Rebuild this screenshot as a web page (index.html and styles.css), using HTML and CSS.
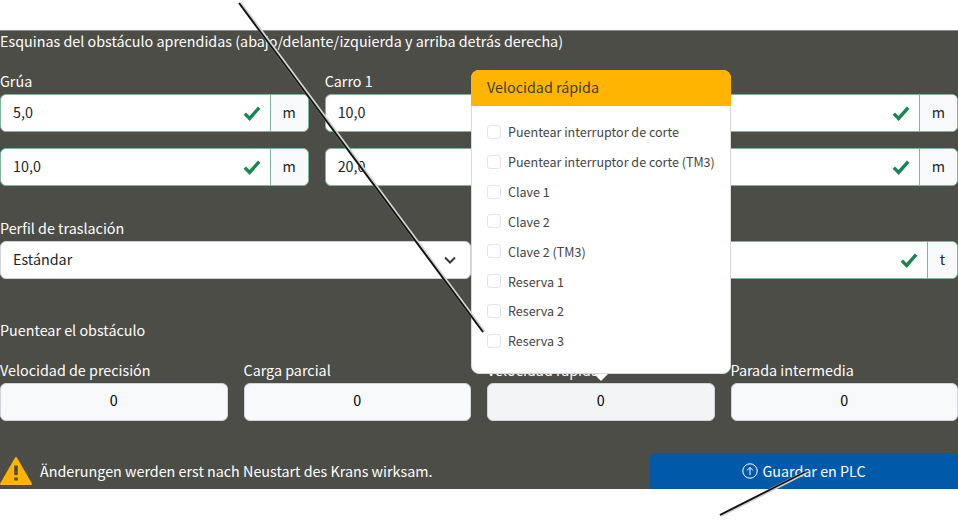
FILE: index.html
```html
<!DOCTYPE html>
<html lang="es">
<head>
<meta charset="utf-8">
<title>Esquinas del obstáculo</title>
<link rel="stylesheet" href="styles.css">
</head>
<body>
<main class="panel">
  <h2 class="title">Esquinas del obstáculo aprendidas (abajo/delante/izquierda y arriba detrás derecha)</h2>
  <section class="grid three">
    <div class="field">
      <label>Grúa</label>
      <div class="group"><span class="input">5,0</span><svg class="check" viewBox="0 0 18 16"><path d="M1.8 8.6 6.6 13.4 16.2 2.6"/></svg><span class="addon"><span>m</span></span></div>
    </div>
    <div class="field">
      <label>Carro 1</label>
      <div class="group"><span class="input">10,0</span><svg class="check" viewBox="0 0 18 16"><path d="M1.8 8.6 6.6 13.4 16.2 2.6"/></svg><span class="addon"></span></div>
    </div>
    <div class="field">
      <label></label>
      <div class="group"><span class="input"></span><svg class="check" viewBox="0 0 18 16"><path d="M1.8 8.6 6.6 13.4 16.2 2.6"/></svg><span class="addon"><span>m</span></span></div>
    </div>
    <div class="field">
      <div class="group"><span class="input">10,0</span><svg class="check" viewBox="0 0 18 16"><path d="M1.8 8.6 6.6 13.4 16.2 2.6"/></svg><span class="addon"><span>m</span></span></div>
    </div>
    <div class="field">
      <div class="group"><span class="input">20,0</span><svg class="check" viewBox="0 0 18 16"><path d="M1.8 8.6 6.6 13.4 16.2 2.6"/></svg><span class="addon"></span></div>
    </div>
    <div class="field">
      <div class="group"><span class="input"></span><svg class="check" viewBox="0 0 18 16"><path d="M1.8 8.6 6.6 13.4 16.2 2.6"/></svg><span class="addon"><span>m</span></span></div>
    </div>
  </section>
  <section class="grid two">
    <div class="field">
      <label>Perfil de traslación</label>
      <div class="select"><span class="input">Estándar</span><svg class="chevron" viewBox="0 0 16 16"><path d="M3 5.5 8 10.5 13 5.5"/></svg></div>
    </div>
    <div class="field">
      <label></label>
      <div class="group"><span class="input"></span><svg class="check" viewBox="0 0 18 16"><path d="M1.8 8.6 6.6 13.4 16.2 2.6"/></svg><span class="addon narrow"><span>t</span></span></div>
    </div>
  </section>
  <h3 class="subtitle">Puentear el obstáculo</h3>
  <section class="grid four">
    <div class="field"><label>Velocidad de precisión</label><button class="stepper">0</button></div>
    <div class="field"><label>Carga parcial</label><button class="stepper">0</button></div>
    <div class="field"><label>Velocidad rápida</label><button class="stepper active">0</button></div>
    <div class="field"><label>Parada intermedia</label><button class="stepper">0</button></div>
  </section>
  <footer class="footer">
    <div class="warning">
      <svg class="warn-icon" viewBox="0 0 32 30"><path class="warn-bg" d="M16 2 31 28H1Z"/><path class="warn-mark" d="M16 9.5V19M16 21.5V24.5"/></svg>
      <span class="warn-text">Änderungen werden erst nach Neustart des Krans wirksam.</span>
    </div>
    <button class="save">
      <svg class="up" viewBox="0 0 16 16"><circle cx="8" cy="8" r="7.2"/><path d="M8 12V4.6M5 7.4 8 4.4 11 7.4"/></svg>
      <span class="save-text">Guardar en PLC</span>
    </button>
  </footer>
</main>

<aside class="popover">
  <header class="pop-head">Velocidad rápida</header>
  <ul class="pop-list">
    <li><i class="box"></i>Puentear interruptor de corte</li>
    <li><i class="box"></i>Puentear interruptor de corte (TM3)</li>
    <li><i class="box"></i>Clave 1</li>
    <li><i class="box"></i>Clave 2</li>
    <li><i class="box"></i>Clave 2 (TM3)</li>
    <li><i class="box"></i>Reserva 1</li>
    <li><i class="box"></i>Reserva 2</li>
    <li><i class="box"></i>Reserva 3</li>
  </ul>
</aside>

<svg class="callouts" viewBox="0 0 958 520">
  <path class="halo" d="M240 3 484 332M720 515.7 805 472.7"/>
  <path class="line" d="M239 3 483 332M720 515 805 472"/>
</svg>
</body>
</html>
```

FILE: styles.css
```css
* { box-sizing: border-box; }
html, body { margin: 0; height: 520px; overflow: hidden; background: #fff; }
body {
  position: relative;
  padding-top: 30px;
  font-family: "Noto Sans CJK JP", "Noto Sans", sans-serif;
  font-size: 14.33px;
  color: #212529;
}
.panel {
  height: 459px;
  background: #4d4d47;
  color: #fff;
  box-shadow: inset 0 1px 0 #8a8a85;
  display: flex;
  flex-direction: column;
}
.title, .subtitle { margin: 0; height: 24px; font-size: inherit; font-weight: 400; line-height: 22px; }
.grid { display: grid; column-gap: 16px; }
.three { grid-template-columns: repeat(3, 1fr); row-gap: 16px; margin-top: 16px; }
.two { grid-template-columns: repeat(2, 1fr); margin-top: 31px; }
.four { grid-template-columns: repeat(4, 1fr); margin-top: 16px; }
.field label { display: block; line-height: 22px; height: 24px; }
.group, .select {
  height: 38px;
  display: flex;
  align-items: center;
  background: #fff;
  color: #212529;
  border-radius: 6px;
}
.group { border: 1px solid #7fb59c; overflow: hidden; }
.input { flex: 1; padding: 0 0 3px 12px; }
.check { width: 18px; height: 16px; margin-right: 9px; fill: none; stroke: #198754; stroke-width: 3.4; }
.addon {
  width: 38px;
  height: 100%;
  padding-bottom: 3px;
  display: flex;
  align-items: center;
  justify-content: center;
  background: #f8f9fa;
  border-left: 1px solid #7fb59c;
}
.addon.narrow { width: 30px; }
.select { justify-content: space-between; padding-right: 12px; border: 1px solid #ced4da; }
.chevron { width: 16px; height: 16px; fill: none; stroke: #343a40; stroke-width: 2; }
.subtitle { margin-top: 40px; }
.stepper {
  width: 100%;
  height: 38px;
  display: block;
  padding: 0 0 5px;
  font: inherit;
  color: #000;
  background: #f8f9fa;
  border: 1px solid #ced4da;
  border-radius: 6px;
}
.stepper.active { background: #f3f4f5; }
.footer { margin-top: auto; display: flex; justify-content: space-between; align-items: flex-end; }
.warning { display: flex; align-items: center; gap: 8px; height: 36px; }
.warn-icon { width: 32px; height: 30px; }
.warn-text, .save-text { padding-bottom: 2px; }
.warn-bg { fill: #ffb500; stroke: #ffb500; stroke-width: 2; stroke-linejoin: round; }
.warn-mark { fill: none; stroke: #4d4d47; stroke-width: 3.6; }
.save {
  width: 308px;
  height: 36px;
  display: flex;
  align-items: center;
  justify-content: center;
  gap: 4px;
  padding: 0;
  font: inherit;
  color: #fff;
  background: #005aa9;
  border: 0;
  border-radius: 6px 6px 0 0;
}
.up { width: 16px; height: 16px; fill: none; stroke: #fff; stroke-width: 1; }
.popover {
  position: absolute;
  left: 471px;
  top: 70px;
  width: 260px;
  height: 304px;
  background: #fff;
  border: 1px solid #d9d9d9;
  border-radius: 8px;
}
.popover::after {
  content: "";
  position: absolute;
  left: 122px;
  bottom: -8px;
  border: 7px solid transparent;
  border-bottom: 0;
  border-top: 7px solid #fff;
}
.pop-head {
  height: 36px;
  margin: -1px -1px 0;
  padding-left: 16px;
  line-height: 34px;
  background: #ffb500;
  color: #3d3a2e;
  border-radius: 8px 8px 0 0;
}
.pop-list { list-style: none; margin: 11px 0 0; padding: 0 0 0 15px; font-size: 12.54px; color: #444; }
.pop-list li { display: flex; align-items: center; gap: 7px; height: 29.85px; white-space: nowrap; }
.box { width: 14px; height: 14px; flex: none; border: 1px solid #e3e5e8; border-radius: 3px; background: #fff; }
.callouts { position: absolute; left: 0; top: 0; width: 958px; height: 520px; pointer-events: none; }
.callouts path { fill: none; }
.halo { stroke: #d4d4d4; stroke-width: 3.6; }
.line { stroke: #111; stroke-width: 1.9; }
```
